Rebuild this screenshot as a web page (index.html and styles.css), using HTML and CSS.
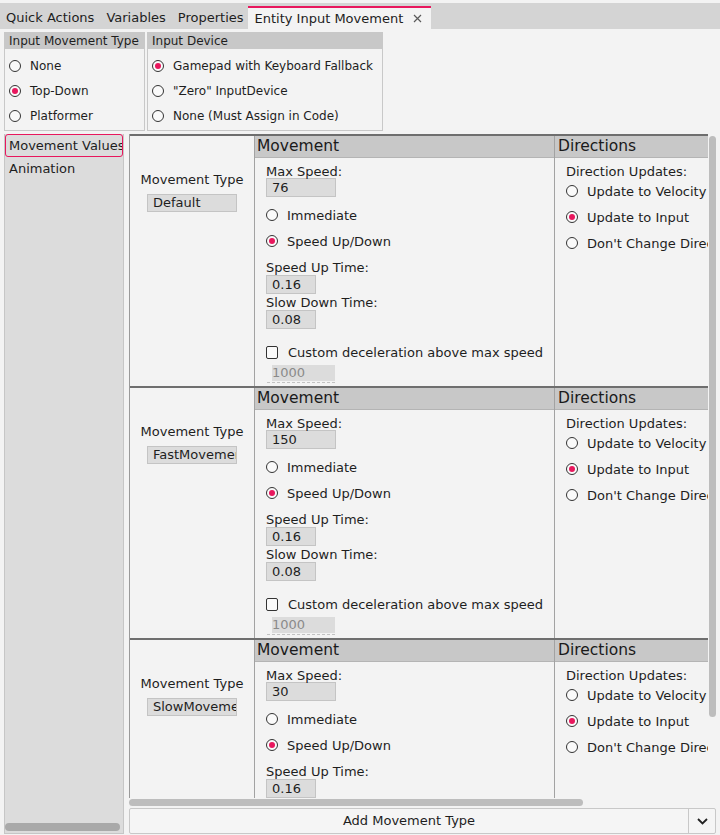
FILE: index.html
```html
<!DOCTYPE html>
<html>
<head>
<meta charset="utf-8">
<link rel="stylesheet" href="styles.css">
</head>
<body>
<div class="tabbar">
  <div class="tab">Quick Actions</div>
  <div class="tab">Variables</div>
  <div class="tab">Properties</div>
  <div class="tab active">Entity Input Movement<svg class="close" width="9" height="9" viewBox="0 0 9 9"><path d="M1 1L8 8M8 1L1 8" stroke="#5a5a5a" stroke-width="1.2" fill="none"/></svg></div>
</div>

<div class="groups">
  <div class="group g1">
    <div class="group-h">Input Movement Type</div>
    <div class="group-b">
      <div class="radio"><span class="rb"></span>None</div>
      <div class="radio"><span class="rb on"></span>Top-Down</div>
      <div class="radio"><span class="rb"></span>Platformer</div>
    </div>
  </div>
  <div class="group g2">
    <div class="group-h">Input Device</div>
    <div class="group-b">
      <div class="radio"><span class="rb on"></span>Gamepad with Keyboard Fallback</div>
      <div class="radio"><span class="rb"></span>"Zero" InputDevice</div>
      <div class="radio"><span class="rb"></span>None (Must Assign in Code)</div>
    </div>
  </div>
</div>

<div class="main">
  <div class="sidebar">
    <div class="side-list">
      <div class="side-item sel">Movement Values</div>
      <div class="side-item">Animation</div>
    </div>
    <div class="side-hbar"><div class="side-thumb"></div></div>
  </div>

  <div class="content">
    <div class="scroller">
      <div class="viewport">
        <div class="mrow">
          <div class="c-type">
            <div class="lbl">Movement Type</div>
            <div class="type-inp">Default</div>
          </div>
          <div class="c-move">
            <div class="col-h">Movement</div>
            <div class="col-b">
              <div class="lbl">Max Speed:</div>
              <div class="inp w70">76</div>
              <div class="rgroup">
                <div class="radio r26"><span class="rb"></span>Immediate</div>
                <div class="radio r26"><span class="rb on"></span>Speed Up/Down</div>
              </div>
              <div class="lbl mt6">Speed Up Time:</div>
              <div class="inp w50 mt1">0.16</div>
              <div class="lbl mt1">Slow Down Time:</div>
              <div class="inp w50 mt1">0.08</div>
              <div class="check"><span class="cb"></span>Custom deceleration above max speed</div>
              <div class="inp dis">1000</div>
            </div>
          </div>
          <div class="c-dir">
            <div class="col-h">Directions</div>
            <div class="col-b">
              <div class="lbl">Direction Updates:</div>
              <div class="radio r26"><span class="rb"></span>Update to Velocity</div>
              <div class="radio r26"><span class="rb on"></span>Update to Input</div>
              <div class="radio r26"><span class="rb"></span>Don't Change Directions</div>
            </div>
          </div>
        </div>

        <div class="mrow">
          <div class="c-type">
            <div class="lbl">Movement Type</div>
            <div class="type-inp">FastMovement</div>
          </div>
          <div class="c-move">
            <div class="col-h">Movement</div>
            <div class="col-b">
              <div class="lbl">Max Speed:</div>
              <div class="inp w70">150</div>
              <div class="rgroup">
                <div class="radio r26"><span class="rb"></span>Immediate</div>
                <div class="radio r26"><span class="rb on"></span>Speed Up/Down</div>
              </div>
              <div class="lbl mt6">Speed Up Time:</div>
              <div class="inp w50 mt1">0.16</div>
              <div class="lbl mt1">Slow Down Time:</div>
              <div class="inp w50 mt1">0.08</div>
              <div class="check"><span class="cb"></span>Custom deceleration above max speed</div>
              <div class="inp dis">1000</div>
            </div>
          </div>
          <div class="c-dir">
            <div class="col-h">Directions</div>
            <div class="col-b">
              <div class="lbl">Direction Updates:</div>
              <div class="radio r26"><span class="rb"></span>Update to Velocity</div>
              <div class="radio r26"><span class="rb on"></span>Update to Input</div>
              <div class="radio r26"><span class="rb"></span>Don't Change Directions</div>
            </div>
          </div>
        </div>

        <div class="mrow">
          <div class="c-type">
            <div class="lbl">Movement Type</div>
            <div class="type-inp">SlowMovement</div>
          </div>
          <div class="c-move">
            <div class="col-h">Movement</div>
            <div class="col-b">
              <div class="lbl">Max Speed:</div>
              <div class="inp w70">30</div>
              <div class="rgroup">
                <div class="radio r26"><span class="rb"></span>Immediate</div>
                <div class="radio r26"><span class="rb on"></span>Speed Up/Down</div>
              </div>
              <div class="lbl mt6">Speed Up Time:</div>
              <div class="inp w50 mt1">0.16</div>
              <div class="lbl mt1">Slow Down Time:</div>
              <div class="inp w50 mt1">0.08</div>
              <div class="check"><span class="cb"></span>Custom deceleration above max speed</div>
              <div class="inp dis">1000</div>
            </div>
          </div>
          <div class="c-dir">
            <div class="col-h">Directions</div>
            <div class="col-b">
              <div class="lbl">Direction Updates:</div>
              <div class="radio r26"><span class="rb"></span>Update to Velocity</div>
              <div class="radio r26"><span class="rb on"></span>Update to Input</div>
              <div class="radio r26"><span class="rb"></span>Don't Change Directions</div>
            </div>
          </div>
        </div>
      </div>
      <div class="vtrack"><div class="vthumb"></div></div>
      <div class="htrack"><div class="hthumb"></div></div>
    </div>

    <div class="add-btn">
      <div class="add-label">Add Movement Type</div>
      <div class="add-arrow"><svg width="11" height="7" viewBox="0 0 11 7"><path d="M1 1L5.5 5.5L10 1" stroke="#222" stroke-width="1.8" fill="none"/></svg></div>
    </div>
  </div>
</div>
</body>
</html>
```

FILE: styles.css
```css
html, body {
  margin: 0;
  padding: 0;
}
body {
  width: 720px;
  height: 835px;
  overflow: hidden;
  background: #f3f3f3;
  font-family: "DejaVu Sans", Verdana, sans-serif;
  font-size: 12px;
  color: #1e1e1e;
}

/* tabs */
.tabbar {
  margin-top: 3px;
  height: 26px;
  background: #d4d4d4;
  display: flex;
  align-items: flex-end;
  font-size: 13px;
}
.tab {
  height: 23px;
  box-sizing: border-box;
  padding: 2px 6px 0 6px;
  line-height: 20px;
  white-space: nowrap;
  color: #1e1e1e;
}
.tab.active {
  background: #f3f3f3;
  border-top: 2px solid #e8175d;
  padding: 0 9px 0 7px;
  margin-left: -2px;
  display: flex;
  align-items: center;
}
.close {
  margin-left: 10px;
}

/* group boxes */
.groups {
  display: flex;
  gap: 2px;
  padding: 3px 0 0 4px;
}
.group {
  border: 1px solid #c8c8c8;
  box-sizing: border-box;
  height: 99px;
}
.g1 { width: 141px; }
.g2 { width: 236px; }
.group-h {
  height: 16px;
  line-height: 16px;
  background: #c8c8c8;
  padding-left: 4px;
  white-space: nowrap;
}
.group-b {
  padding: 4px 0 0 4px;
}
.radio {
  display: flex;
  align-items: center;
  height: 25px;
  white-space: nowrap;
}
.radio.r26 { height: 26px; }
.rb {
  width: 12px;
  height: 12px;
  box-sizing: border-box;
  border: 1px solid #333;
  border-radius: 50%;
  background: #fafafa;
  margin-right: 9px;
  flex: none;
  display: flex;
  align-items: center;
  justify-content: center;
}
.rb.on::before {
  content: "";
  width: 6px;
  height: 6px;
  border-radius: 50%;
  background: #e8175d;
}

/* main */
.main {
  display: flex;
  margin-top: 3px;
  height: 700px;
  font-size: 13px;
}
.sidebar {
  margin-left: 4px;
  width: 120px;
  box-sizing: border-box;
  background: #dcdcdc;
  border: 1px solid #c6c6c6;
  border-top: none;
  display: flex;
  flex-direction: column;
}
.side-list {
  flex: 1;
  overflow: hidden;
}
.side-item {
  height: 23px;
  box-sizing: border-box;
  line-height: 21px;
  padding-left: 3px;
  border: 1px solid transparent;
  white-space: nowrap;
  overflow: hidden;
}
.side-item.sel {
  border-color: #e8175d;
  border-radius: 3px;
}
.side-hbar {
  height: 9px;
  padding: 0 3px 1px 0;
}
.side-thumb {
  height: 8px;
  border-radius: 4px;
  background: #a9a9a9;
}

.content {
  margin-left: 5px;
  width: 588px;
  display: flex;
  flex-direction: column;
}
.scroller {
  display: grid;
  grid-template-columns: 579px 9px;
  grid-template-rows: 664px 9px;
}
.viewport {
  overflow: hidden;
  border-left: 1px solid #9a9a9a;
  box-sizing: border-box;
}
.vtrack {
  padding: 2px 0 0 1px;
}
.vthumb {
  width: 7px;
  height: 581px;
  border-radius: 4px;
  background: #bdbdbd;
}
.htrack {
  grid-column: 1 / span 2;
  padding-top: 1px;
}
.hthumb {
  width: 454px;
  height: 7px;
  border-radius: 4px;
  background: #bdbdbd;
}

/* movement rows */
.mrow {
  display: flex;
  width: 660px;
  border-top: 2px solid #6e6e6e;
}
.c-type {
  width: 124px;
  flex: none;
  text-align: center;
  padding-top: 36px;
}
.type-inp {
  display: inline-block;
  width: 90px;
  height: 18px;
  box-sizing: border-box;
  margin-top: 8px;
  background: #dcdcdc;
  border: 1px solid #c4c4c4;
  text-align: left;
  padding-left: 5px;
  line-height: 16px;
  white-space: nowrap;
  overflow: hidden;
}
.c-move {
  width: 300px;
  flex: none;
  box-sizing: border-box;
  border-left: 1px solid #a2a2a2;
}
.c-dir {
  width: 236px;
  flex: none;
  box-sizing: border-box;
  border-left: 1px solid #a2a2a2;
}
.col-h {
  height: 22px;
  box-sizing: border-box;
  background: #c8c8c8;
  border-bottom: 1px solid #b4b4b4;
  font-size: 15.5px;
  line-height: 21px;
  padding-left: 2px;
  color: #1a1a1a;
}
.c-dir .col-h { padding-left: 3px; }
.col-b {
  padding: 6px 0 3px 11px;
}
.lbl {
  height: 14px;
  line-height: 15px;
  white-space: nowrap;
}
.inp {
  height: 19px;
  box-sizing: border-box;
  background: #dcdcdc;
  border: 1px solid #c4c4c4;
  padding-left: 5px;
  line-height: 17px;
}
.w70 { width: 70px; }
.w50 { width: 50px; }
.mt1 { margin-top: 1px; }
.mt6 { margin-top: 6px; }
.rgroup { margin-top: 5px; }
.check {
  margin-top: 11px;
  height: 24px;
  display: flex;
  align-items: center;
  white-space: nowrap;
}
.cb {
  width: 12px;
  height: 13px;
  box-sizing: border-box;
  border: 1px solid #333;
  border-radius: 2px;
  background: #fafafa;
  margin-right: 10px;
  flex: none;
}
.inp.dis {
  margin-top: 1px;
  margin-left: 1px;
  width: 68px;
  height: 18px;
  border: none;
  border-bottom: 1px dashed #c2c2c2;
  padding: 0 0 1px 5px;
  background-clip: content-box;
  color: #8a8a8a;
  line-height: 16px;
}

/* add button */
.add-btn {
  margin-top: 1px;
  width: 587px;
  height: 26px;
  box-sizing: border-box;
  border: 1px solid #c8c8c8;
  border-radius: 2px;
  display: flex;
  background: #f5f5f5;
}
.add-label {
  flex: 1;
  text-align: center;
  line-height: 24px;
}
.add-arrow {
  width: 26px;
  border-left: 1px solid #c8c8c8;
  display: flex;
  align-items: center;
  justify-content: center;
}
```
